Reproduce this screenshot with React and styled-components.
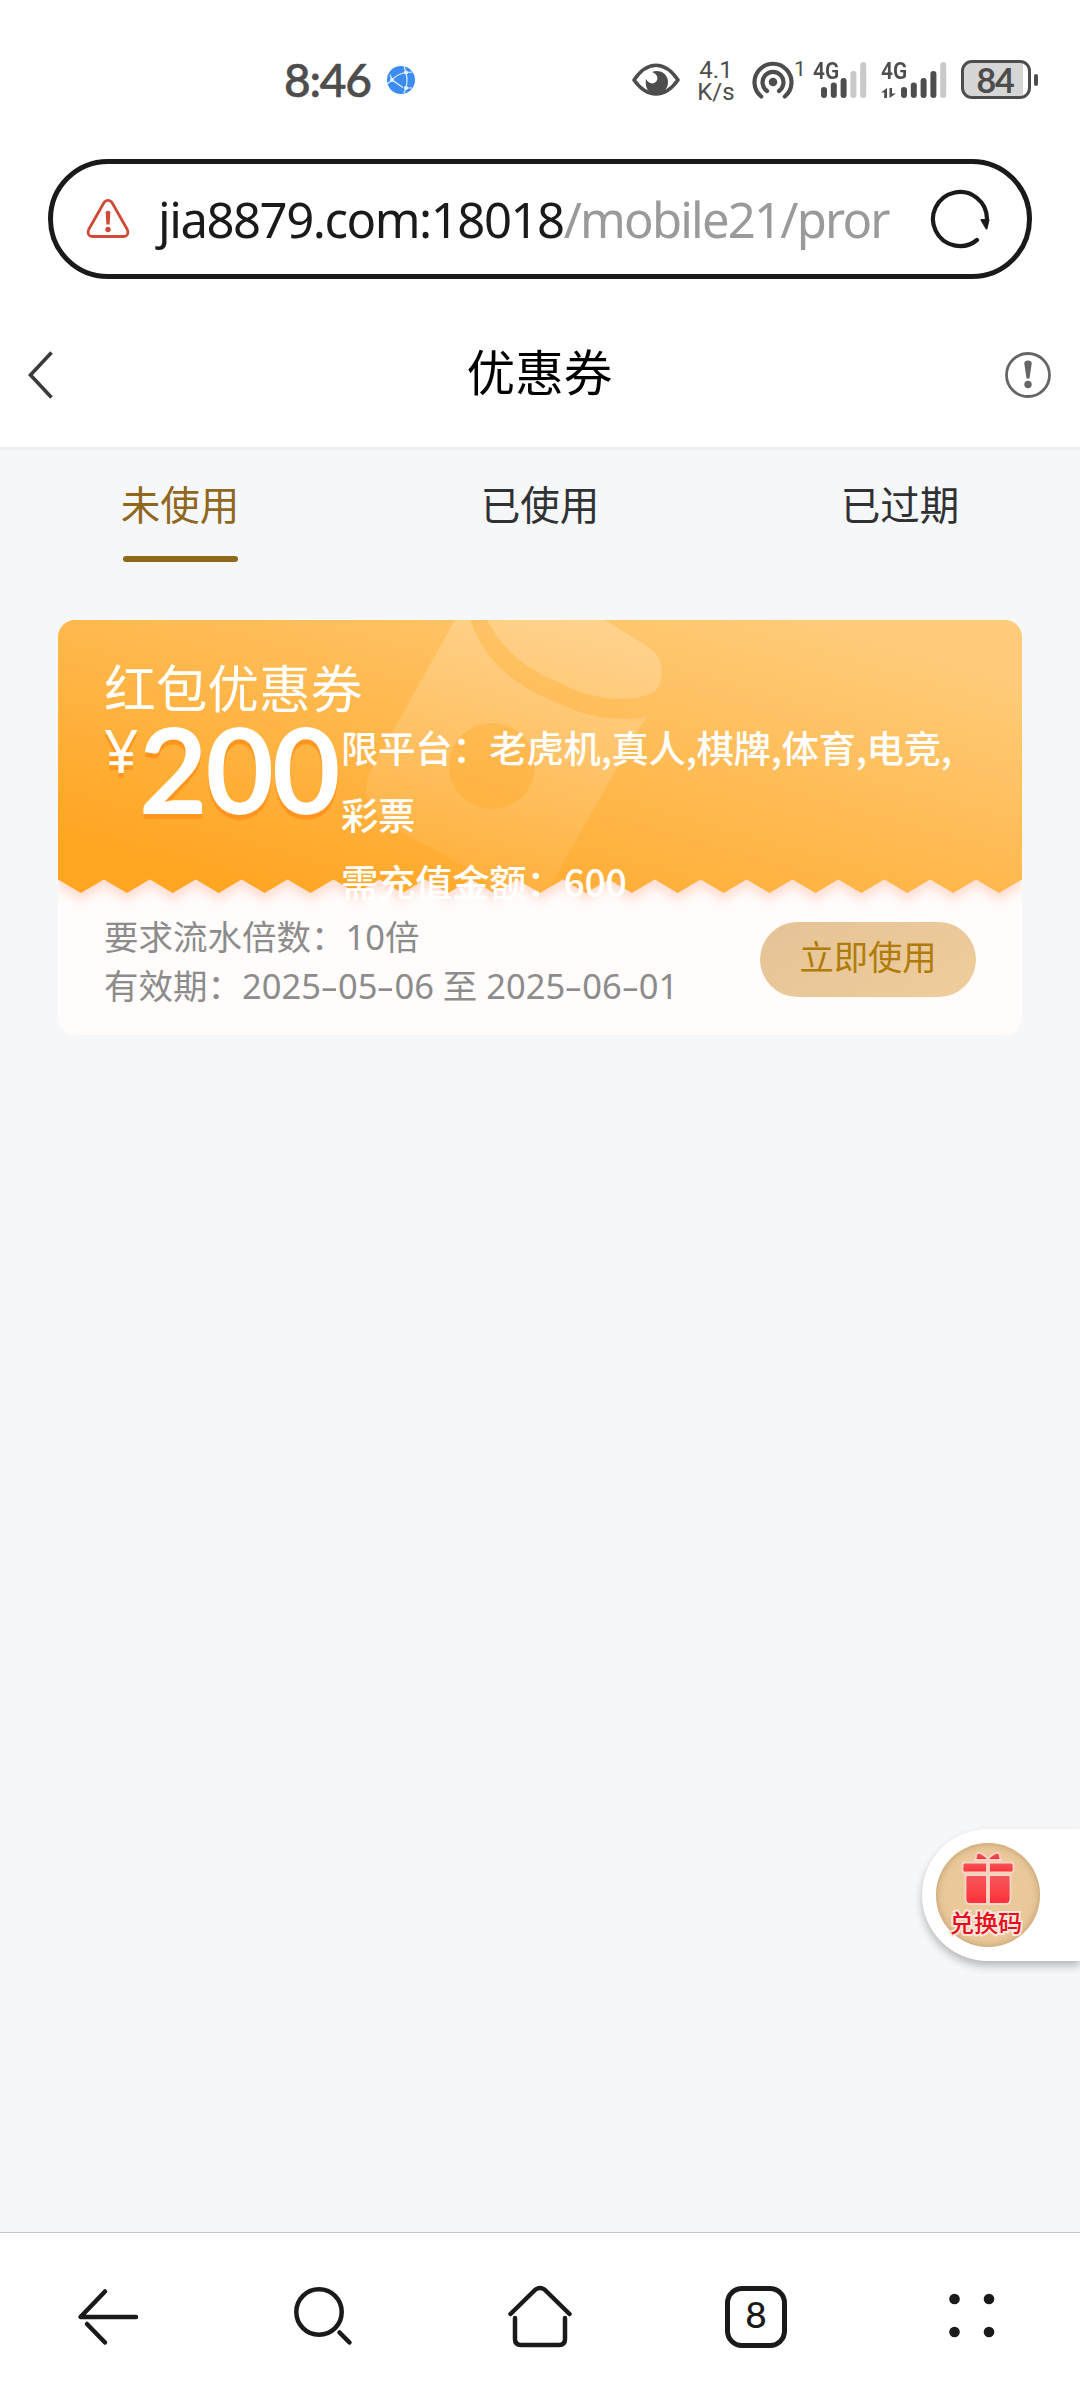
import styled, { createGlobalStyle } from "styled-components";

const GlobalStyle = createGlobalStyle`
  * {
    box-sizing: border-box;
  }
  body {
    margin: 0;
    background-color: #f5f7f9;
    font-family: "Noto Sans", "Noto Sans CJK SC", sans-serif;
  }
  svg {
    display: block;
    flex: none;
  }
`;

const Screen = styled.div`
  width: 1080px;
  height: 2400px;
  display: flex;
  flex-direction: column;
  overflow: hidden;
  background-color: #f5f7f9;
`;

const TopArea = styled.header`
  height: 450px;
  background-color: #fff;
  border-bottom: 3px solid #eff0f1;
`;

const StatusBar = styled.div`
  height: 159px;
  padding: 0 42px 0 284px;
  display: flex;
  align-items: center;
  color: #4d4d4d;
`;

const Clock = styled.div`
  width: 103px;
  padding-top: 1px;
  font-family: Lato, sans-serif;
  font-size: 46px;
  font-weight: 500;
  letter-spacing: -1.2px;
  line-height: 56px;
  -webkit-text-stroke: 0.6px #4d4d4d;
`;

const StatusIcons = styled.div`
  flex: 1;
  display: flex;
  justify-content: flex-end;
  align-items: center;
`;

const NetSpeed = styled.div`
  width: 38px;
  margin: 2px 17px 0 17px;
  font-family: Roboto, sans-serif;
  font-size: 24px;
  line-height: 22px;
  text-align: center;
`;

const SpeedValue = styled.div`
  height: 22px;
`;

const Hotspot = styled.div`
  width: 61px;
  height: 40px;
  display: flex;
  font-family: Roboto, sans-serif;
  font-size: 21px;
  line-height: 18px;
`;

const Signal = styled.div`
  width: 54px;
  height: 40px;
  margin-right: ${(props) => props.$gap}px;
  position: relative;
`;

const NetType = styled.span`
  position: absolute;
  top: 1px;
  left: 0;
  font-family: Roboto, sans-serif;
  font-size: 24px;
  font-weight: 600;
  line-height: 20px;
  transform: scaleX(0.87);
  transform-origin: left;
`;

const Battery = styled.div`
  width: 70px;
  height: 39px;
  border: 3px solid #4d4d4d;
  border-radius: 11px;
  background: linear-gradient(to right, #d6d6d6 59px, #fff 59px);
  font-family: Lato, sans-serif;
  font-size: 34px;
  font-weight: 700;
  line-height: 33px;
  letter-spacing: -1.2px;
  text-align: center;
  padding-right: 2px;
`;

const BatteryTip = styled.div`
  width: 4px;
  height: 12px;
  margin-left: 3px;
  border-radius: 2px;
  background-color: #4d4d4d;
`;

const AddressBar = styled.div`
  height: 120px;
  margin: 0 48px;
  padding: 0 37px 0 33px;
  display: flex;
  align-items: center;
  justify-content: space-between;
  border: 5px solid #1a1a1a;
  border-radius: 60px;
`;

const Url = styled.div`
  width: 772px;
  margin-left: 16px;
  padding-left: 6px;
  white-space: nowrap;
  font-size: 49px;
  line-height: 70px;
  letter-spacing: -1.45px;
  color: #1a1a1a;
`;

const UrlPath = styled.span`
  letter-spacing: -1.8px;
  color: #9a9a9a;
`;

const PageHeader = styled.div`
  height: 144px;
  margin-top: 24px;
  padding: 0 29px 0 28px;
  display: flex;
  align-items: center;
  justify-content: space-between;
`;

const PageTitle = styled.h1`
  margin: 0;
  padding-bottom: 6px;
  font-size: 48.6px;
  font-weight: 400;
  line-height: 60px;
  color: #000;
`;

const Tabs = styled.nav`
  height: 112px;
  display: flex;
`;

const Tab = styled.div`
  flex: 1;
  display: flex;
  flex-direction: column;
  align-items: center;
  padding-top: 5px;
  font-size: 39.5px;
  line-height: 101px;
  color: ${(props) => (props.$active ? "#8f671d" : "#303133")};
`;

const TabLine = styled.div`
  width: 115px;
  height: 6px;
  border-radius: 3px;
  background-color: #8f671d;
`;

const Content = styled.main`
  flex: 1;
  padding: 58px 58px 0;
`;

const Card = styled.article`
  height: 415px;
  padding: 34px 46px 0 46px;
  position: relative;
  border-radius: 17px;
  overflow: hidden;
  background-color: #fffcfb;
`;

const CardArt = styled.svg`
  position: absolute;
  top: 0;
  left: 0;
`;

const CardTitle = styled.div`
  position: relative;
  font-size: 51.7px;
  line-height: 68px;
  color: #fff;
`;

const CardMain = styled.div`
  height: 190px;
  display: flex;
  position: relative;
  color: #fff;
`;

const Amount = styled.div`
  width: 237px;
  display: flex;
  text-shadow: 0 5px 1px #ff951e;
`;

const Currency = styled.span`
  width: 35px;
  font-size: 60px;
  line-height: 57px;
`;

const Value = styled.span`
  font-family: Lato, sans-serif;
  font-size: 118px;
  font-weight: 700;
  line-height: 94px;
  letter-spacing: -2px;
`;

const Rules = styled.div`
  width: 635px;
  margin-top: -8px;
  font-family: "Noto Sans CJK SC", sans-serif;
  font-size: 37.4px;
  font-weight: 500;
  line-height: 67px;
  letter-spacing: -0.3px;
  white-space: nowrap;
`;

const CardBottom = styled.div`
  display: flex;
  justify-content: space-between;
  align-items: flex-start;
  position: relative;
`;

const Terms = styled.div`
  font-size: 34.5px;
  line-height: 49px;
  color: #8c8c8c;
  white-space: nowrap;
`;

const Dash = styled.span`
  display: inline-block;
  width: 17px;
  text-align: center;
  transform: scaleX(1.6);
`;

const UseButton = styled.button`
  width: 216px;
  height: 75px;
  margin-top: 10px;
  padding: 0 0 9px;
  border: 0;
  border-radius: 38px;
  background: linear-gradient(150deg, #e4c397, #efcd9b);
  font-family: "Noto Sans CJK SC", sans-serif;
  font-size: 34.3px;
  line-height: 60px;
  color: #b07c09;
`;

const RedeemButton = styled.div`
  width: 158px;
  height: 132px;
  padding: 14px;
  position: absolute;
  left: 922px;
  top: 1829px;
  border-radius: 66px 0 0 66px;
  background-color: #fff;
  box-shadow: 0 5px 9px rgba(0, 0, 0, 0.26);
`;

const RedeemCircle = styled.div`
  width: 104px;
  height: 104px;
  display: flex;
  flex-direction: column;
  align-items: center;
  border-radius: 50%;
  background-color: #e9c89a;
  box-shadow: inset 0 0 7px 1px #c3a173;
`;

const RedeemText = styled.div`
  margin-top: -2px;
  padding-right: 4px;
  font-family: "Noto Sans CJK SC", sans-serif;
  font-size: 24.2px;
  font-weight: 500;
  line-height: 36px;
  color: #e60f1b;
  -webkit-text-stroke: 4px #fbe6dc;
  paint-order: stroke fill;
`;

const BottomNav = styled.footer`
  height: 168px;
  display: flex;
  border-top: 1px solid #c8c8c8;
  background-color: #fff;
`;

const NavItem = styled.div`
  flex: 1;
  display: flex;
  justify-content: center;
  padding-top: 48px;
`;

const TabCount = styled.div`
  width: 62px;
  height: 62px;
  margin-top: 5px;
  border: 5px solid #1a1a1a;
  border-radius: 17px;
  font-family: Lato, sans-serif;
  font-size: 37px;
  font-weight: 500;
  line-height: 46px;
  text-align: center;
  color: #1a1a1a;
`;

const GlobeIcon = () => (
  <svg width="28" height="28" viewBox="0 0 28 28">
    <circle cx="14" cy="14" r="14" fill="#3c8cf4" />
    <g stroke="#e3f0ff" strokeWidth="1.2" fill="none">
      <path d="M0 18 5 14Q10 8 19 6.5L26 6M3 8.5 5 14 16 21.5M19 6.5Q21 14 19 22M17 0 19 6.5M19 22 25 22M19 22 17 27" />
    </g>
    <g fill="#e3f0ff">
      <circle cx="5" cy="14" r="2.1" />
      <circle cx="19" cy="6.5" r="2.1" />
      <circle cx="19" cy="22" r="2.1" />
    </g>
  </svg>
);

const EyeIcon = () => (
  <svg width="48" height="34" viewBox="0 0 48 34">
    <path
      d="M2 17Q12 2.2 24 2.2T46 17Q36 31 24 31T2 17Z"
      fill="none"
      stroke="#4d4d4d"
      strokeWidth="3.6"
      strokeLinejoin="round"
    />
    <path
      d="M20 9C28 6 36 11 36 19C36 27 30 31 24 31C17 31 12.5 25 14 16C16 20 20 21.5 23 19.5C27 17 26 11 20 9Z"
      fill="#4d4d4d"
    />
  </svg>
);

const HotspotIcon = () => (
  <svg width="42" height="40" viewBox="0 0 42 40">
    <circle cx="21" cy="22" r="4.3" fill="#4d4d4d" />
    <g fill="none" stroke="#4d4d4d" strokeWidth="4.2" strokeLinecap="round">
      <path d="M15 31A10.5 10.5 0 1 1 27 31" />
      <path d="M9.2 36.5A18.5 18.5 0 1 1 32.8 36.5" />
    </g>
  </svg>
);

const bars = [11, 15.5, 20, 27, 36];

const SignalIcon = ({ active, offset, arrows }) => (
  <svg width="72" height="40" viewBox="0 0 72 40">
    {bars.map((h, i) => (
      <rect
        key={h}
        x={offset + i * 9.8}
        y={38 - h}
        width="6"
        height={h}
        rx="3"
        fill={i < active ? "#4d4d4d" : "#c9c9c9"}
      />
    ))}
    {arrows && (
      <path
        d="M0 32.5 6 28V38H3.2V32.5ZM8.5 28H11V33.5H15L8.5 38Z"
        fill="#4d4d4d"
      />
    )}
  </svg>
);

const WarningIcon = () => (
  <svg width="44" height="40" viewBox="0 0 44 40">
    <path
      d="M18.2 3.3Q22 -.5 25.8 3.3L41.3 30.5Q43.5 36.5 38 37.5H6Q.5 36.5 2.7 30.5Z"
      fill="none"
      stroke="#cf4a38"
      strokeWidth="2.8"
      strokeLinejoin="round"
    />
    <path d="M19.6 13Q22 10.5 24.4 13L23.6 25.5H20.4Z" fill="#cf4a38" />
    <circle cx="22" cy="30.5" r="2.7" fill="#cf4a38" />
  </svg>
);

const ReloadIcon = () => (
  <svg width="60" height="60" viewBox="0 0 60 60">
    <path
      d="M47 51A27 27 0 1 1 57 30"
      fill="none"
      stroke="#1a1a1a"
      strokeWidth="4.2"
      strokeLinecap="round"
    />
    <path
      d="M51.5 31H58.5L56.5 39.5Z"
      fill="#1a1a1a"
      stroke="#1a1a1a"
      strokeWidth="2"
      strokeLinejoin="round"
    />
  </svg>
);

const BackIcon = () => (
  <svg width="46" height="48" viewBox="0 0 46 48">
    <path d="M23.5 1.5 2.5 24 23.5 46.5" fill="none" stroke="#3a3a3a" strokeWidth="3.6" />
  </svg>
);

const InfoIcon = () => (
  <svg width="46" height="46" viewBox="0 0 46 46">
    <circle cx="23" cy="23" r="21.5" fill="none" stroke="#666" strokeWidth="2.8" />
    <path d="M19.3 11.5Q19.3 8.5 23 8.5T26.7 11.5L24.5 26.5H21.5Z" fill="#666" />
    <circle cx="23" cy="32.5" r="3.7" fill="#666" />
  </svg>
);

// 21 teeth across the width of the coupon
const TEETH = 21;
const TOOTH = 964 / TEETH;
const zigzag = Array.from({ length: TEETH }, (_, i) => {
  const x = 964 - i * TOOTH;
  return `L${x - TOOTH / 2} 273L${x - TOOTH} 259.5`;
}).join("");

const CouponArt = () => (
  <CardArt width="964" height="415" viewBox="0 0 964 415">
    <defs>
      <linearGradient id="coupon" gradientUnits="userSpaceOnUse" x1="426" y1="345" x2="540" y2="-58">
        <stop offset="0" stopColor="#ffa521" />
        <stop offset="1" stopColor="#ffcb79" />
      </linearGradient>
      <linearGradient id="shine" gradientUnits="userSpaceOnUse" x1="480" y1="0" x2="420" y2="273">
        <stop offset="0" stopColor="#fff" stopOpacity="0.22" />
        <stop offset="1" stopColor="#fff" stopOpacity="0.05" />
      </linearGradient>
      <filter id="glow" x="-5%" y="-20%" width="110%" height="150%">
        <feGaussianBlur stdDeviation="5" />
      </filter>
      <clipPath id="body">
        <path d={`M0 0H964V259.5${zigzag}Z`} />
      </clipPath>
    </defs>
    <path
      d={`M0 0H964V259.5${zigzag}Z`}
      transform="translate(0 8)"
      fill="#ff7a50"
      opacity="0.22"
      filter="url(#glow)"
    />
    <path d={`M0 0H964V259.5${zigzag}Z`} fill="url(#coupon)" />
    <g clipPath="url(#body)" fill="url(#shine)">
      <path
        fillRule="evenodd"
        d="M397 0H412C428 45 462 68 500 83C530 98 560 102 588 97L488 273H432C428 262 420 254 408 247L335 207C315 198 301 176 312 152ZM434 103A43 43 0 1 0 434 189A43 43 0 1 0 434 103Z"
      />
      <path d="M429 0C446 32 470 50 500 62C530 79 568 83 592 74C604 71 610 44 594 30C580 20 562 10 547 0Z" />
    </g>
  </CardArt>
);

const GiftSvg = styled.svg`
  margin-top: 7px;
`;

const GiftIcon = () => (
  <GiftSvg width="58" height="56" viewBox="0 0 58 56">
    <defs>
      <linearGradient id="gift" x1="0" y1="0" x2="0" y2="1">
        <stop offset="0" stopColor="#f4595b" />
        <stop offset="1" stopColor="#ff2f38" />
      </linearGradient>
    </defs>
    <g fill="url(#gift)" stroke="#fbd5c6" strokeWidth="1.8">
      <path d="M29 9C26 5 21 2 18.5 3C16 4 18 8 16 10H29ZM29 9C32 5 37 2 39.5 3C42 4 40 8 42 10H29Z" />
      <path d="M6 12.5H28V22.5H6Q3.5 22.5 3.5 20V15Q3.5 12.5 6 12.5ZM30 12.5H52Q54.5 12.5 54.5 15V20Q54.5 22.5 52 22.5H30Z" />
      <path d="M6.5 25H28V54H11Q6.5 54 6.5 49ZM30 25H51.5V49Q51.5 54 47 54H30Z" />
    </g>
  </GiftSvg>
);

const NavIcon = ({ children }) => (
  <svg
    width="72"
    height="72"
    viewBox="0 0 72 72"
    fill="none"
    stroke="#1a1a1a"
    strokeWidth="4.5"
    strokeLinecap="round"
    strokeLinejoin="round"
  >
    {children}
  </svg>
);

const App = () => {
  return (
    <>
      <GlobalStyle />
      <Screen>
        <TopArea>
          <StatusBar>
            <Clock>8:46</Clock>
            <GlobeIcon />
            <StatusIcons>
              <EyeIcon />
              <NetSpeed>
                <SpeedValue>4.1</SpeedValue>
                <SpeedValue>K/s</SpeedValue>
              </NetSpeed>
              <Hotspot>
                <HotspotIcon />1
              </Hotspot>
              <Signal $gap={14}>
                <NetType>4G</NetType>
                <SignalIcon active={3} offset={8} />
              </Signal>
              <Signal $gap={26}>
                <NetType>4G</NetType>
                <SignalIcon active={4} offset={20} arrows />
              </Signal>
              <Battery>84</Battery>
              <BatteryTip />
            </StatusIcons>
          </StatusBar>
          <AddressBar>
            <WarningIcon />
            <Url>
              jia8879.com:18018<UrlPath>/mobile21/pror</UrlPath>
            </Url>
            <ReloadIcon />
          </AddressBar>
          <PageHeader>
            <BackIcon />
            <PageTitle>优惠券</PageTitle>
            <InfoIcon />
          </PageHeader>
        </TopArea>
        <Tabs>
          <Tab $active>
            未使用
            <TabLine />
          </Tab>
          <Tab>已使用</Tab>
          <Tab>已过期</Tab>
        </Tabs>
        <Content>
          <Card>
            <CouponArt />
            <CardTitle>红包优惠券</CardTitle>
            <CardMain>
              <Amount>
                <Currency>¥</Currency>
                <Value>200</Value>
              </Amount>
              <Rules>
                限平台：老虎机,真人,棋牌,体育,电竞,
                <br />
                彩票
                <br />
                需充值金额：600
              </Rules>
            </CardMain>
            <CardBottom>
              <Terms>
                要求流水倍数：10倍
                <br />
                有效期：2025<Dash>-</Dash>05<Dash>-</Dash>06 至 2025<Dash>-</Dash>06
                <Dash>-</Dash>01
              </Terms>
              <UseButton>立即使用</UseButton>
            </CardBottom>
          </Card>
        </Content>
        <RedeemButton>
          <RedeemCircle>
            <GiftIcon />
            <RedeemText>兑换码</RedeemText>
          </RedeemCircle>
        </RedeemButton>
        <BottomNav>
          <NavItem>
            <NavIcon>
              <path d="M33 10.5 8.5 36H64M33 61.5 15 43" />
            </NavIcon>
          </NavItem>
          <NavItem>
            <NavIcon>
              <circle cx="31" cy="31" r="22.7" />
              <path d="M51.5 51.5 61.5 61.5" />
            </NavIcon>
          </NavItem>
          <NavItem>
            <NavIcon>
              <path d="M6.5 33 31.5 8.5Q36 5.5 40.5 8.5L65.5 33" />
              <path d="M11 37V58Q11 64 17 64H55Q61 64 61 58V37" />
            </NavIcon>
          </NavItem>
          <NavItem>
            <TabCount>8</TabCount>
          </NavItem>
          <NavItem>
            <NavIcon>
              <g fill="#1a1a1a" stroke="none">
                <circle cx="18.5" cy="18" r="5.3" />
                <circle cx="53" cy="18" r="5.3" />
                <circle cx="18.5" cy="51" r="5.3" />
                <circle cx="53" cy="51" r="5.3" />
              </g>
            </NavIcon>
          </NavItem>
        </BottomNav>
      </Screen>
    </>
  );
};

export default App;
